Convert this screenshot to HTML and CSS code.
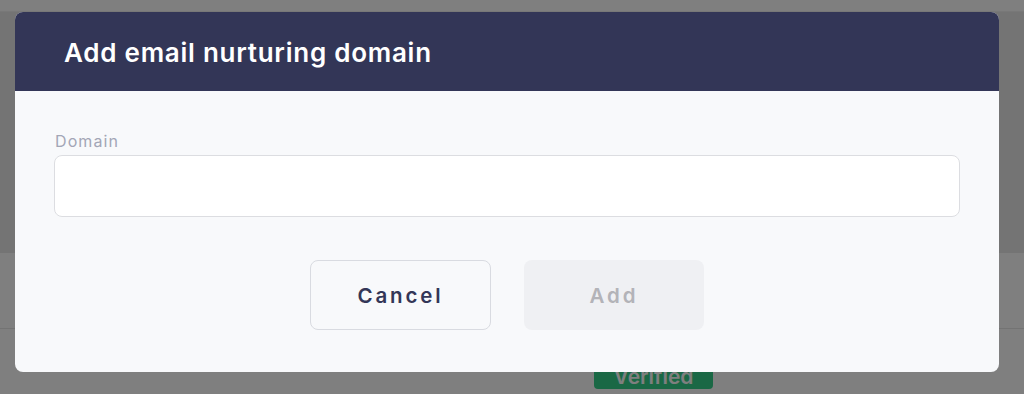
FILE: index.html
```html
<!DOCTYPE html>
<html lang="en">
<head>
<meta charset="utf-8">
<title>Add email nurturing domain</title>
<link rel="stylesheet" href="styles.css">
</head>
<body>
<div class="page">
  <div class="topbar"></div>
  <div class="band"></div>
  <div class="row"></div>
  <div class="row row-badge"><span class="badge">Verified</span></div>
</div>
<div class="overlay"></div>
<div class="modal" role="dialog" aria-labelledby="modal-title">
  <div class="modal-header">
    <h2 id="modal-title" class="modal-title">Add email nurturing domain</h2>
  </div>
  <div class="modal-body">
    <label class="field-label" for="domain">Domain</label>
    <input id="domain" class="field-input" type="text">
    <div class="actions">
      <button class="btn btn-cancel" type="button">Cancel</button>
      <button class="btn btn-add" type="button" disabled>Add</button>
    </div>
  </div>
</div>
</body>
</html>
```
FILE: styles.css
```css
* { box-sizing: border-box; }
html, body { margin: 0; padding: 0; }
body {
  width: 1024px;
  height: 394px;
  overflow: hidden;
  background: #ffffff;
  font-family: "Inter", "Liberation Sans", sans-serif;
  position: relative;
}
.page { display: flex; flex-direction: column; }
.topbar { height: 12px; background: #ffffff; border-bottom: 1px solid #f0f0f0; }
.band { height: 241px; background: #e8e8e8; }
.row { height: 76px; background: #ffffff; border-bottom: 1px solid #e6e6e6; }
.row-badge { display: flex; align-items: flex-start; padding-left: 594px; padding-top: 34px; border-bottom: none; }
.badge {
  display: inline-flex; align-items: center; justify-content: center;
  width: 119px; height: 26px;
  background: #34d08a; color: #ffffff;
  border-radius: 4px;
  font-weight: 600; font-size: 21px;
}
.overlay { position: absolute; inset: 0; background: rgba(0,0,0,0.5); }
.modal {
  position: absolute; left: 15px; top: 12px;
  width: 984px; height: 360px;
  border-radius: 8px; overflow: hidden;
  background: #f8f9fb;
  display: flex; flex-direction: column;
}
.modal-header {
  height: 79px; background: #333657;
  display: flex; align-items: center;
  padding-left: 49px;
}
.modal-title {
  margin: 0; color: #ffffff;
  font-family: "Inter", "Liberation Sans", sans-serif;
  font-weight: 600; font-size: 26px; letter-spacing: 0.75px;
  padding-top: 1px;
}
.modal-body {
  display: flex; flex-direction: column;
  padding: 40px 39px 42px;
}
.field-label {
  font-size: 16px; line-height: 20px; color: #a3a6b6;
  letter-spacing: 1.1px; padding-left: 1px;
}
.field-input {
  margin-top: 4px; height: 62px; width: 100%;
  border: 1px solid #dcdde1; border-radius: 8px;
  background: #ffffff; outline: none;
}
.actions {
  margin-top: 43px;
  display: flex; justify-content: center; gap: 33px;
}
.btn {
  width: 181px; height: 70px; border-radius: 8px;
  font-family: "Inter", "Liberation Sans", sans-serif;
  font-size: 20.5px; font-weight: 600; letter-spacing: 2.9px;
}
.btn-cancel { background: transparent; border: 1px solid #d9dbe1; color: #333657; }
.btn-add { background: #eff0f3; border: none; color: #b3b3b8; width: 180px; }
```
